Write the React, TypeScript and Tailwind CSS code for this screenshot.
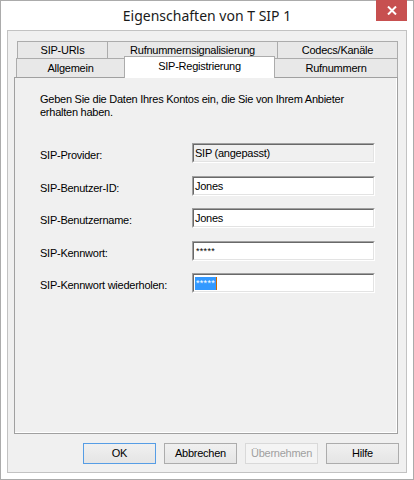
import type { ReactNode } from 'react'
import clsx from 'clsx'

const fields = [
  { label: 'SIP-Provider:', value: 'SIP (angepasst)', readOnly: true },
  { label: 'SIP-Benutzer-ID:', value: 'Jones' },
  { label: 'SIP-Benutzername:', value: 'Jones' },
  { label: 'SIP-Kennwort:', value: '*****', secret: true },
  { label: 'SIP-Kennwort wiederholen:', value: '*****', secret: true, focused: true },
]

// classic sunken edit box: dark top/left, light bottom/right
function Edit({ children, readOnly }: { children: ReactNode; readOnly?: boolean }) {
  return (
    <div className="w-[183px] h-[20px] border border-t-[#a0a0a0] border-l-[#a0a0a0] border-b-white border-r-white">
      <div
        className={clsx(
          'h-full flex items-center px-px border border-t-[#696969] border-l-[#696969] border-b-[#e3e3e3] border-r-[#e3e3e3]',
          readOnly ? 'bg-[#f0f0f0]' : 'bg-white',
        )}
      >
        {children}
      </div>
    </div>
  )
}

function Tab({ label, className }: { label: string; className?: string }) {
  return (
    <div
      className={clsx(
        'flex items-center justify-center border border-[#acacac] bg-[#e8e8e8] -ml-px first:ml-0',
        className,
      )}
    >
      {label}
    </div>
  )
}

function Button({ label, primary, disabled }: { label: string; primary?: boolean; disabled?: boolean }) {
  return (
    <button
      disabled={disabled}
      className={clsx(
        'w-[73px] h-[21px] border flex items-center justify-center',
        disabled
          ? 'border-[#d9d9d9] bg-[#f4f4f4] text-[#a0a0a0]'
          : 'bg-gradient-to-b from-[#f0f0f0] to-[#e5e5e5]',
        primary ? 'border-[#569de5]' : !disabled && 'border-[#acacac]',
      )}
    >
      {label}
    </button>
  )
}

export default function App() {
  return (
    <div className="w-[414px] h-[480px] flex flex-col border border-[#ababab] bg-white text-black font-['Liberation_Sans',Arial,sans-serif] text-[11px] leading-[13px] tracking-[-0.25px]">
      {/* title bar */}
      <div className="relative h-[29px] flex items-center justify-center">
        <span className="font-['Noto_Sans',sans-serif] text-[14px] tracking-normal text-[#1a1a1a]">
          Eigenschaften von T SIP 1
        </span>
        <button className="absolute -top-px right-[6px] w-[31px] h-[21px] bg-[#c75050] flex items-center justify-center">
          <svg width="10" height="9" viewBox="0 0 10 9">
            <path d="M1 0.5 L9 8.5 M9 0.5 L1 8.5" stroke="#fff" strokeWidth="2" />
          </svg>
        </button>
      </div>

      {/* client area */}
      <div className="mx-[6px] h-[443px] flex flex-col border border-[#c2c2c2] bg-[#f0f0f0]">
        <div className="pt-[10px] pl-[6px] pr-[8px]">
          <div className="flex ml-[3px] h-[18px]">
            <Tab label="SIP-URIs" className="w-[91px]" />
            <Tab label="Rufnummernsignalisierung" className="w-[171px]" />
            <Tab label="Codecs/Kanäle" className="w-[121px]" />
          </div>
          <div className="flex items-end ml-[2px] -mt-px h-[19px]">
            <Tab label="Allgemein" className="w-[109px] h-[19px] border-b-0 pt-px" />
            <div className="relative z-10 -ml-px -mb-px w-[151px] h-[22px] flex items-center justify-center pb-[2px] border border-b-0 border-[#acacac] bg-white">
              SIP-Registrierung
            </div>
            <Tab label="Rufnummern" className="w-[124px] h-[19px] border-b-0 pt-px" />
          </div>

          {/* tab page */}
          <div className="h-[357px] border border-[#a0a0a0] shadow-[inset_-1px_-1px_0_#fff] pt-[15px] pl-[25px]">
            <p>
              Geben Sie die Daten Ihres Kontos ein, die Sie von Ihrem Anbieter
              <br />
              erhalten haben.
            </p>
            <div className="mt-[24px] flex flex-col">
              {fields.map((f, i) => (
                <div
                  key={f.label}
                  className={clsx('flex items-center h-[20px]', i > 0 && (i % 2 ? 'mt-[13px]' : 'mt-[12px]'))}
                >
                  <span className="w-[152px] pt-[4px]">{f.label}</span>
                  <Edit readOnly={f.readOnly}>
                    {f.focused ? (
                      <span className="flex items-center">
                        <span className="h-[13px] px-px bg-[#3399ff] text-white text-[9px] tracking-[0.3px] leading-[13px]">
                          {f.value}
                        </span>
                        <span className="w-px h-[13px] bg-[#cc6600]" />
                      </span>
                    ) : (
                      <span className={clsx(f.secret && 'pl-px text-[9px] tracking-[0.3px]')}>{f.value}</span>
                    )}
                  </Edit>
                </div>
              ))}
            </div>
          </div>
        </div>

        <div className="mt-[9px] flex justify-end gap-[8px] pr-[7px]">
          <Button label="OK" primary />
          <Button label="Abbrechen" />
          <Button label="Übernehmen" disabled />
          <Button label="Hilfe" />
        </div>
      </div>
    </div>
  )
}
